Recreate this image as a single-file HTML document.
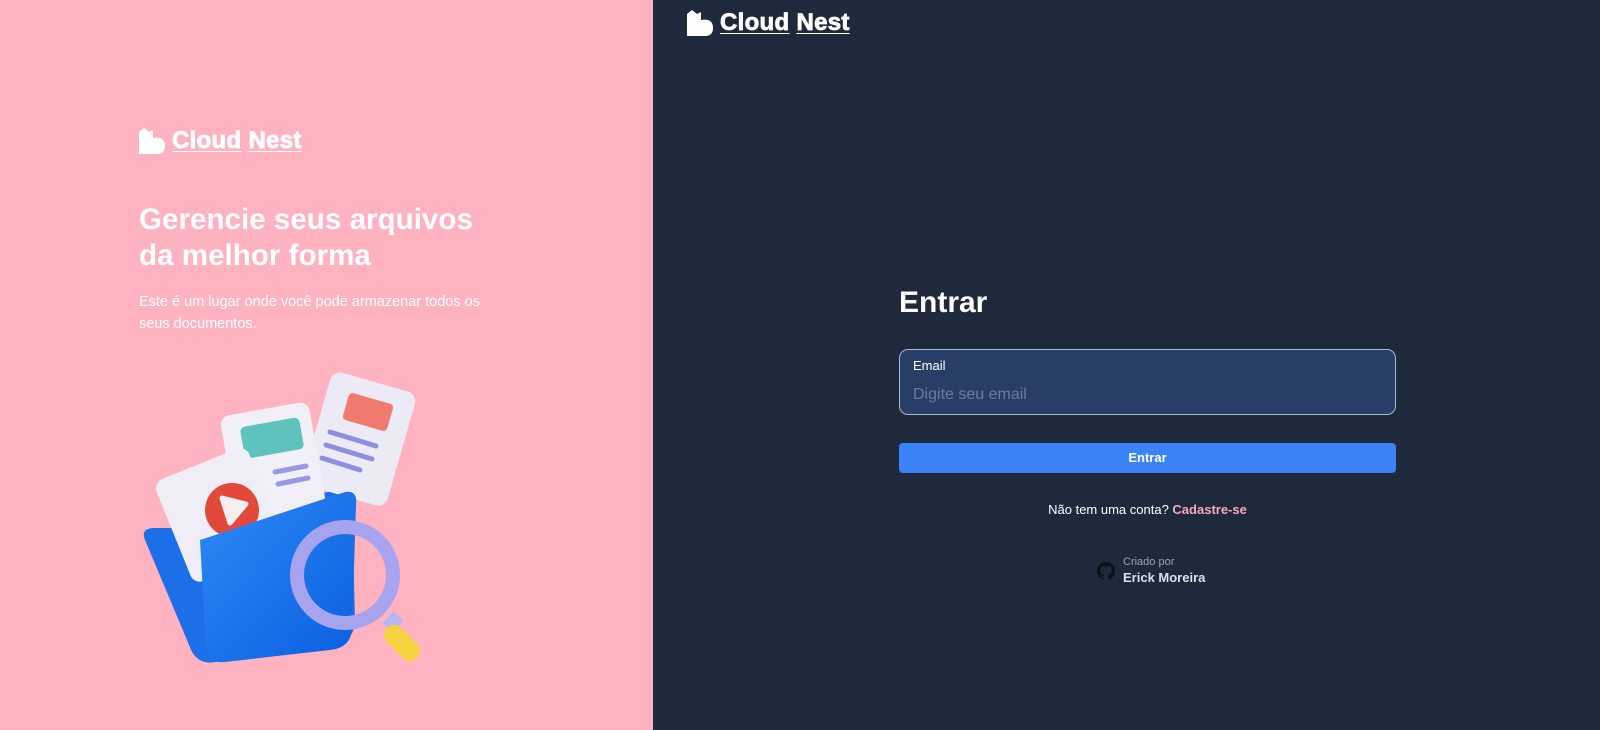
<!DOCTYPE html>
<html><head><meta charset="utf-8">
<style>
*{margin:0;padding:0;box-sizing:border-box}
body{width:1600px;height:730px;overflow:hidden;font-family:"Liberation Sans",Arial,sans-serif;background:#1e293b}
.left{position:absolute;left:0;top:0;width:653px;height:730px;background:#ffb3c1}
.right{position:absolute;left:653px;top:0;width:947px;height:730px;background:#1e293b}
.logo{position:absolute;display:flex;align-items:center;color:#fff;font-weight:900;font-size:24px;letter-spacing:0.3px;-webkit-text-stroke:0.8px #fff}
.logo span{text-decoration:underline;text-decoration-thickness:1px;text-underline-offset:3px}
h1{position:absolute;left:139px;top:202px;color:#fff;font-size:29.6px;line-height:36px;font-weight:700}
.sub{position:absolute;left:139px;top:291px;color:#fff;font-size:14.5px;line-height:22px;width:370px}
.title{position:absolute;left:899px;top:286px;color:#fff;font-size:30px;font-weight:700}
.input{position:absolute;left:899px;top:349px;width:497px;height:66px;border:1px solid #a9b8d6;border-radius:9px;background:#293e66}
.input .lab{position:absolute;left:13px;top:8px;color:#fff;font-size:13px}
.input .ph{position:absolute;left:13px;top:36px;color:#6b7c9c;font-size:16px}
.btn{position:absolute;left:899px;top:443px;width:497px;height:30px;border-radius:4px;background:#3b82f6;color:#fff;font-size:13px;font-weight:700;text-align:center;line-height:30px}
.acc{position:absolute;left:899px;width:497px;top:502px;text-align:center;color:#fff;font-size:13px}
.acc b{color:#f9a8c0;font-weight:700}
.credit{position:absolute;left:1097px;top:556px;display:flex;align-items:center}
.credit .t1{color:#9aa5b8;font-size:11px}
.credit .t2{color:#dbe1ea;font-size:13px;font-weight:700;margin-top:2px}
</style></head><body>
<div class="left">
  <div class="logo" style="left:139px;top:127px">
    <svg width="27" height="26" viewBox="0 0 27 26"><path d="M0 4 L5 0 L10 4 L14 2 L14 10 Q26 8 26 18 Q26 26 18 26 L0 26 Z" fill="#fff"/></svg>
    <span style="margin-left:6px">Cloud</span>&nbsp;<span>Nest</span>
  </div>
  <h1>Gerencie seus arquivos<br>da melhor forma</h1>
  <div class="sub">Este é um lugar onde você pode armazenar todos os seus documentos.</div>
  <svg style="position:absolute;left:130px;top:360px" width="310" height="320" viewBox="0 0 310 320">
    <defs>
      <linearGradient id="fb" x1="0" y1="0" x2="1" y2="1"><stop offset="0" stop-color="#2f8af5"/><stop offset="1" stop-color="#0a5fe0"/></linearGradient>
    </defs>
    <path d="M15 180 Q10 168 25 168 L80 168 L95 150 L210 130 Q222 128 222 140 L225 260 Q225 280 205 285 L85 302 Q70 305 62 292 Z" fill="#1d6fe8"/>
    <rect x="185" y="20" width="88" height="118" rx="10" fill="#ecebf5" transform="rotate(16 229 79)"/>
    <rect x="215" y="38" width="46" height="28" rx="4" fill="#f07a6e" transform="rotate(16 238 52)"/>
    <g stroke="#8f8fe0" stroke-width="5" stroke-linecap="round"><line x1="200" y1="72" x2="246" y2="86"/><line x1="196" y1="85" x2="242" y2="99"/><line x1="192" y1="98" x2="230" y2="110"/></g>
    <rect x="100" y="48" width="90" height="130" rx="10" fill="#f1f0f8" transform="rotate(-10 145 113)"/>
    <rect x="112" y="62" width="60" height="32" rx="5" fill="#5ec3bc" transform="rotate(-10 142 78)"/>
    <g stroke="#9a98e6" stroke-width="5" stroke-linecap="round"><line x1="145" y1="112" x2="176" y2="106"/><line x1="148" y1="124" x2="178" y2="118"/></g>
    <rect x="40" y="100" width="100" height="110" rx="10" fill="#efeef6" transform="rotate(-22 90 155)"/>
    <circle cx="102" cy="150" r="27" fill="#e2493b"/>
    <path d="M92 138 L116 144 L100 163 Z" fill="#f4f0f0" stroke="#f4f0f0" stroke-width="5" stroke-linejoin="round"/>
    <path d="M70 180 L215 132 Q228 130 226 145 L222 270 Q220 288 200 290 L95 302 Q78 304 76 288 Z" fill="url(#fb)"/>
    <circle cx="215" cy="215" r="48" fill="none" stroke="#a7a3ee" stroke-width="14"/>
    <rect x="255" y="255" width="16" height="14" fill="#b8b6ef" transform="rotate(-45 263 262)"/>
    <rect x="262" y="262" width="20" height="42" rx="9" fill="#f5d340" transform="rotate(-45 272 283)"/>
  </svg>
</div>
<div class="right">
  <div class="logo" style="left:34px;top:9px">
    <svg width="27" height="26" viewBox="0 0 27 26"><path d="M0 4 L5 0 L10 4 L14 2 L14 10 Q26 8 26 18 Q26 26 18 26 L0 26 Z" fill="#fff"/></svg>
    <span style="margin-left:6px">Cloud</span>&nbsp;<span>Nest</span>
  </div>
</div>
<div class="title">Entrar</div>
<div class="input"><div class="lab">Email</div><div class="ph">Digite seu email</div></div>
<div class="btn">Entrar</div>
<div class="acc">Não tem uma conta? <b>Cadastre-se</b></div>
<div class="credit">
  <svg width="18" height="18" viewBox="0 0 16 16"><path fill="#0d1117" d="M8 0C3.58 0 0 3.58 0 8c0 3.54 2.29 6.53 5.47 7.59.4.07.55-.17.55-.38v-1.33c-2.23.48-2.7-1.07-2.7-1.07-.36-.92-.89-1.17-.89-1.17-.73-.5.06-.49.06-.49.8.06 1.23.83 1.23.83.71 1.22 1.87.87 2.33.66.07-.52.28-.87.5-1.07-1.78-.2-3.64-.89-3.64-3.95 0-.87.31-1.59.82-2.15-.08-.2-.36-1.02.08-2.12 0 0 .67-.21 2.2.82A7.6 7.6 0 0 1 8 3.87c.68 0 1.36.09 2 .27 1.53-1.04 2.2-.82 2.2-.82.44 1.1.16 1.92.08 2.12.51.56.82 1.27.82 2.15 0 3.07-1.87 3.75-3.65 3.95.29.25.54.73.54 1.48v2.2c0 .21.15.46.55.38A8 8 0 0 0 16 8c0-4.42-3.58-8-8-8z"/></svg>
  <div style="margin-left:8px"><div class="t1">Criado por</div><div class="t2">Erick Moreira</div></div>
</div>
</body></html>
